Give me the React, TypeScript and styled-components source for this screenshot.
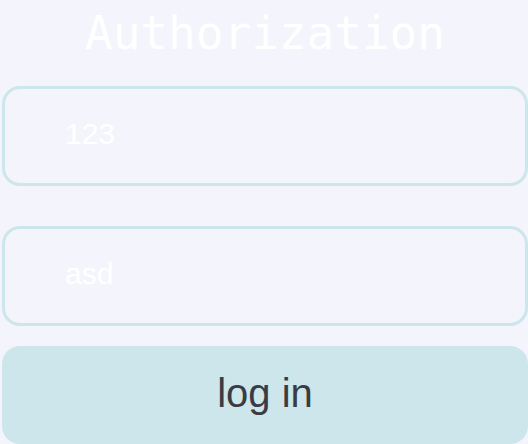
import React, { useState } from 'react';
import styled, { createGlobalStyle } from 'styled-components';

const GlobalStyle = createGlobalStyle`
  html, body {
    margin: 0;
    padding: 0;
    background: #f3f4fc;
    overflow: hidden;
  }
`;

const Page = styled.div`
  display: flex;
  flex-direction: column;
  align-items: flex-start;
  width: 528px;
  height: 444px;
  padding: 10px 0 0 2px;
  box-sizing: border-box;
  font-family: "Liberation Sans", Arial, sans-serif;
`;

const Title = styled.h1`
  margin: 0 0 30px;
  width: 526px;
  height: 46px;
  line-height: 46px;
  text-align: center;
  font-family: "DejaVu Sans Mono", "Liberation Mono", monospace;
  font-weight: 400;
  font-size: 46px;
  color: #ffffff;
`;

const Field = styled.input<{ $gap: number }>`
  box-sizing: border-box;
  width: 526px;
  height: 100px;
  margin: 0 0 ${(p) => p.$gap}px;
  padding: 0 0 5px 60px;
  border: 3px solid #cce6ec;
  border-radius: 18px;
  background: transparent;
  outline: none;
  font-family: "Liberation Sans", Arial, sans-serif;
  font-size: 30px;
  color: #ffffff;
`;

const LoginButton = styled.button`
  box-sizing: border-box;
  width: 526px;
  height: 98px;
  padding: 0 0 4px;
  border: none;
  border-radius: 18px;
  background: #cce6eb;
  font-family: "Liberation Sans", Arial, sans-serif;
  font-size: 40px;
  color: #3a3b44;
  cursor: pointer;
`;

const App: React.FC = () => {
  const [login, setLogin] = useState('123');
  const [password, setPassword] = useState('asd');

  return (
    <>
      <GlobalStyle />
      <Page>
        <Title>Authorization</Title>
        <Field $gap={40} value={login} onChange={(e) => setLogin(e.target.value)} />
        <Field $gap={20} value={password} onChange={(e) => setPassword(e.target.value)} />
        <LoginButton>log in</LoginButton>
      </Page>
    </>
  );
};

export default App;
